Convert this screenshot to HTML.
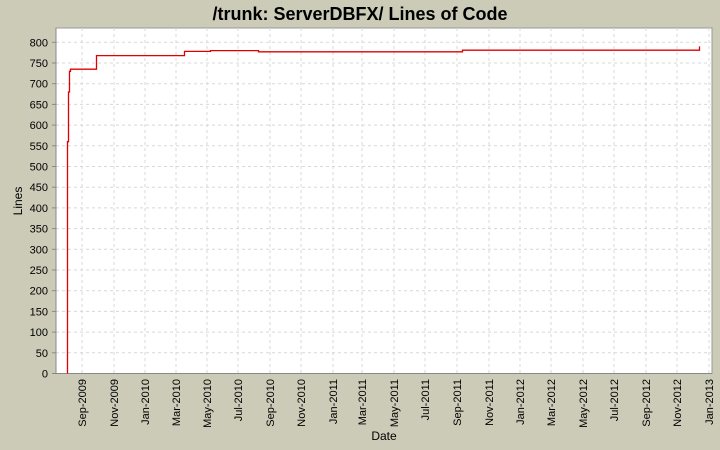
<!DOCTYPE html>
<html><head><meta charset="utf-8"><style>
body{margin:0;background:#cbcbb8;}
svg{display:block;font-family:"Liberation Sans",sans-serif;}
</style></head><body>
<svg width="720" height="450" viewBox="0 0 720 450" xmlns="http://www.w3.org/2000/svg">
<rect width="720" height="450" fill="#cbcbb8"/>
<text x="360" y="20" text-anchor="middle" font-size="18" font-weight="bold" fill="#000">/trunk: ServerDBFX/ Lines of Code</text>
<rect x="56" y="28" width="656" height="345.5" fill="#fff" stroke="#999" stroke-width="1"/>
<g stroke="#d8d8d8" stroke-width="1" stroke-dasharray="3,3">
<line x1="56" x2="712" y1="352.8" y2="352.8"/><line x1="56" x2="712" y1="332.1" y2="332.1"/>
<line x1="56" x2="712" y1="311.4" y2="311.4"/><line x1="56" x2="712" y1="290.7" y2="290.7"/>
<line x1="56" x2="712" y1="270" y2="270"/><line x1="56" x2="712" y1="249.3" y2="249.3"/>
<line x1="56" x2="712" y1="228.6" y2="228.6"/><line x1="56" x2="712" y1="207.9" y2="207.9"/>
<line x1="56" x2="712" y1="187.2" y2="187.2"/><line x1="56" x2="712" y1="166.5" y2="166.5"/>
<line x1="56" x2="712" y1="145.8" y2="145.8"/><line x1="56" x2="712" y1="125.1" y2="125.1"/>
<line x1="56" x2="712" y1="104.4" y2="104.4"/><line x1="56" x2="712" y1="83.7" y2="83.7"/>
<line x1="56" x2="712" y1="63" y2="63"/><line x1="56" x2="712" y1="42.3" y2="42.3"/>
<line y1="28" y2="373" x1="82" x2="82"/><line y1="28" y2="373" x1="114" x2="114"/>
<line y1="28" y2="373" x1="145" x2="145"/><line y1="28" y2="373" x1="176" x2="176"/>
<line y1="28" y2="373" x1="207" x2="207"/><line y1="28" y2="373" x1="238" x2="238"/>
<line y1="28" y2="373" x1="270" x2="270"/><line y1="28" y2="373" x1="301" x2="301"/>
<line y1="28" y2="373" x1="333" x2="333"/><line y1="28" y2="373" x1="362" x2="362"/>
<line y1="28" y2="373" x1="394" x2="394"/><line y1="28" y2="373" x1="425" x2="425"/>
<line y1="28" y2="373" x1="457" x2="457"/><line y1="28" y2="373" x1="489" x2="489"/>
<line y1="28" y2="373" x1="520" x2="520"/><line y1="28" y2="373" x1="551" x2="551"/>
<line y1="28" y2="373" x1="583" x2="583"/><line y1="28" y2="373" x1="614" x2="614"/>
<line y1="28" y2="373" x1="646" x2="646"/><line y1="28" y2="373" x1="677" x2="677"/>
<line y1="28" y2="373" x1="709" x2="709"/>
</g>
<line x1="56" x2="712" y1="373.5" y2="373.5" stroke="#888"/>
<line x1="56" x2="56" y1="28" y2="373.5" stroke="#888"/>
<g stroke="#888">
<line x1="52" x2="56" y1="373.5" y2="373.5"/><line x1="52" x2="56" y1="352.8" y2="352.8"/><line x1="52" x2="56" y1="332.1" y2="332.1"/>
<line x1="52" x2="56" y1="311.4" y2="311.4"/><line x1="52" x2="56" y1="290.7" y2="290.7"/><line x1="52" x2="56" y1="270" y2="270"/>
<line x1="52" x2="56" y1="249.3" y2="249.3"/><line x1="52" x2="56" y1="228.6" y2="228.6"/><line x1="52" x2="56" y1="207.9" y2="207.9"/>
<line x1="52" x2="56" y1="187.2" y2="187.2"/><line x1="52" x2="56" y1="166.5" y2="166.5"/><line x1="52" x2="56" y1="145.8" y2="145.8"/>
<line x1="52" x2="56" y1="125.1" y2="125.1"/><line x1="52" x2="56" y1="104.4" y2="104.4"/><line x1="52" x2="56" y1="83.7" y2="83.7"/>
<line x1="52" x2="56" y1="63" y2="63"/><line x1="52" x2="56" y1="42.3" y2="42.3"/>
</g>
<polyline fill="none" stroke="#e00000" stroke-width="1.3" points="67.5,373.5 67.5,141.7 68.5,141.7 68.5,92 69.5,92 69.5,71.3 70.5,71.3 70.5,69.2 96.5,69.2 96.5,55.6 184.5,55.6 184.5,51.4 210.5,51.4 210.5,50.6 258.5,50.6 258.5,51.8 462.5,51.8 462.5,50.2 699.5,50.2 699.5,46.4"/>
<g font-size="11" text-anchor="end" fill="#000">
<text x="48" y="377.5">0</text><text x="48" y="356.8">50</text><text x="48" y="336.1">100</text>
<text x="48" y="315.4">150</text><text x="48" y="294.7">200</text><text x="48" y="274">250</text>
<text x="48" y="253.3">300</text><text x="48" y="232.6">350</text><text x="48" y="211.9">400</text>
<text x="48" y="191.2">450</text><text x="48" y="170.5">500</text><text x="48" y="149.8">550</text>
<text x="48" y="129.1">600</text><text x="48" y="108.4">650</text><text x="48" y="87.7">700</text>
<text x="48" y="67">750</text><text x="48" y="46.3">800</text>
</g>
<g font-size="11" text-anchor="end" fill="#000">
<text transform="translate(86,379) rotate(-90)">Sep-2009</text>
<text transform="translate(118,379) rotate(-90)">Nov-2009</text>
<text transform="translate(149,379) rotate(-90)">Jan-2010</text>
<text transform="translate(180,379) rotate(-90)">Mar-2010</text>
<text transform="translate(211,379) rotate(-90)">May-2010</text>
<text transform="translate(242,379) rotate(-90)">Jul-2010</text>
<text transform="translate(274,379) rotate(-90)">Sep-2010</text>
<text transform="translate(305,379) rotate(-90)">Nov-2010</text>
<text transform="translate(337,379) rotate(-90)">Jan-2011</text>
<text transform="translate(366,379) rotate(-90)">Mar-2011</text>
<text transform="translate(398,379) rotate(-90)">May-2011</text>
<text transform="translate(429,379) rotate(-90)">Jul-2011</text>
<text transform="translate(461,379) rotate(-90)">Sep-2011</text>
<text transform="translate(493,379) rotate(-90)">Nov-2011</text>
<text transform="translate(524,379) rotate(-90)">Jan-2012</text>
<text transform="translate(555,379) rotate(-90)">Mar-2012</text>
<text transform="translate(587,379) rotate(-90)">May-2012</text>
<text transform="translate(618,379) rotate(-90)">Jul-2012</text>
<text transform="translate(650,379) rotate(-90)">Sep-2012</text>
<text transform="translate(681,379) rotate(-90)">Nov-2012</text>
<text transform="translate(713,379) rotate(-90)">Jan-2013</text>
</g>
<text x="384" y="440" text-anchor="middle" font-size="12">Date</text>
<text transform="translate(22,201) rotate(-90)" text-anchor="middle" font-size="12">Lines</text>
</svg>
</body></html>
